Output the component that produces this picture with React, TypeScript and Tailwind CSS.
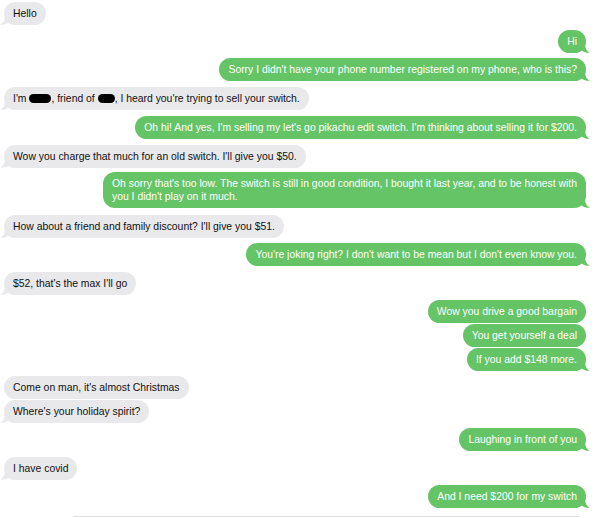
import React from 'react';

type Msg = {
  me: boolean;
  text: React.ReactNode;
  mt: string;
  tail?: boolean;
};

const Blot = ({ w }: { w: string }) => (
  <span className={`inline-block ${w} h-[9px] rounded-full bg-black align-[-1px]`} />
);

const messages: Msg[] = [
  { me: false, text: 'Hello', mt: 'mt-[2px]' },
  { me: true, text: 'Hi', mt: 'mt-[5px]' },
  { me: true, text: "Sorry I didn't have your phone number registered on my phone, who is this?", mt: 'mt-[5px]' },
  {
    me: false,
    text: (
      <>
        I'm <Blot w="w-[22px]" />, friend of <Blot w="w-[17px]" />, I heard you're trying to sell your switch.
      </>
    ),
    mt: 'mt-[6px]',
  },
  { me: true, text: "Oh hi! And yes, I'm selling my let's go pikachu edit switch. I'm thinking about selling it for $200.", mt: 'mt-[6px]' },
  { me: false, text: "Wow you charge that much for an old switch. I'll give you $50.", mt: 'mt-[6px]' },
  {
    me: true,
    text: (
      <>
        Oh sorry that's too low. The switch is still in good condition, I bought it last year, and to be honest with
        <br />
        you I didn't play on it much.
      </>
    ),
    mt: 'mt-[4px]',
  },
  { me: false, text: "How about a friend and family discount? I'll give you $51.", mt: 'mt-[7px]' },
  { me: true, text: "You're joking right? I don't want to be mean but I don't even know you.", mt: 'mt-[5px]' },
  { me: false, text: "$52, that's the max I'll go", mt: 'mt-[6px]' },
  { me: true, text: 'Wow you drive a good bargain', mt: 'mt-[5px]', tail: false },
  { me: true, text: 'You get yourself a deal', mt: 'mt-[1px]', tail: false },
  { me: true, text: 'If you add $148 more.', mt: 'mt-[1px]' },
  { me: false, text: "Come on man, it's almost Christmas", mt: 'mt-[5px]', tail: false },
  { me: false, text: "Where's your holiday spirit?", mt: 'mt-[1px]' },
  { me: true, text: 'Laughing in front of you', mt: 'mt-[5px]' },
  { me: false, text: 'I have covid', mt: 'mt-[6px]' },
  { me: true, text: 'And I need $200 for my switch', mt: 'mt-[5px]' },
];

function Tail({ me }: { me: boolean }) {
  if (me) {
    return (
      <svg className="absolute bottom-0 right-[-4px] w-[9px] h-[10px]" viewBox="0 0 9 10">
        <path d="M0 0 L4 0 C4 5 5.5 8 9 10 C5 10 2 9 0 7 Z" fill="#65c466" />
      </svg>
    );
  }
  return (
    <svg className="absolute bottom-0 left-[-4px] w-[9px] h-[10px]" viewBox="0 0 9 10">
      <path d="M9 0 L5 0 C5 5 3.5 8 0 10 C4 10 7 9 9 7 Z" fill="#e9e9eb" />
    </svg>
  );
}

function Bubble({ m }: { m: Msg }) {
  const tail = m.tail !== false;
  return (
    <div className={`flex ${m.me ? 'justify-end pr-[13px]' : 'justify-start pl-[4px]'} ${m.mt}`}>
      <div
        className={`relative rounded-[12px] px-[9px] py-[5px] text-[10.4px] leading-[13px] whitespace-nowrap ${
          m.me ? 'bg-[#65c466] text-white' : 'bg-[#e9e9eb] text-[#111]'
        }`}
      >
        {tail && <Tail me={m.me} />}
        <span className="relative">{m.text}</span>
      </div>
    </div>
  );
}

export default function App() {
  return (
    <div className="w-[599px] h-[518px] overflow-hidden bg-white font-['Liberation_Sans',Arial,sans-serif]">
      {messages.map((m, i) => (
        <Bubble key={i} m={m} />
      ))}
      <div className="mt-[8px] ml-[74px] mr-[19px] h-px bg-[#e2e2e2]" />
    </div>
  );
}
